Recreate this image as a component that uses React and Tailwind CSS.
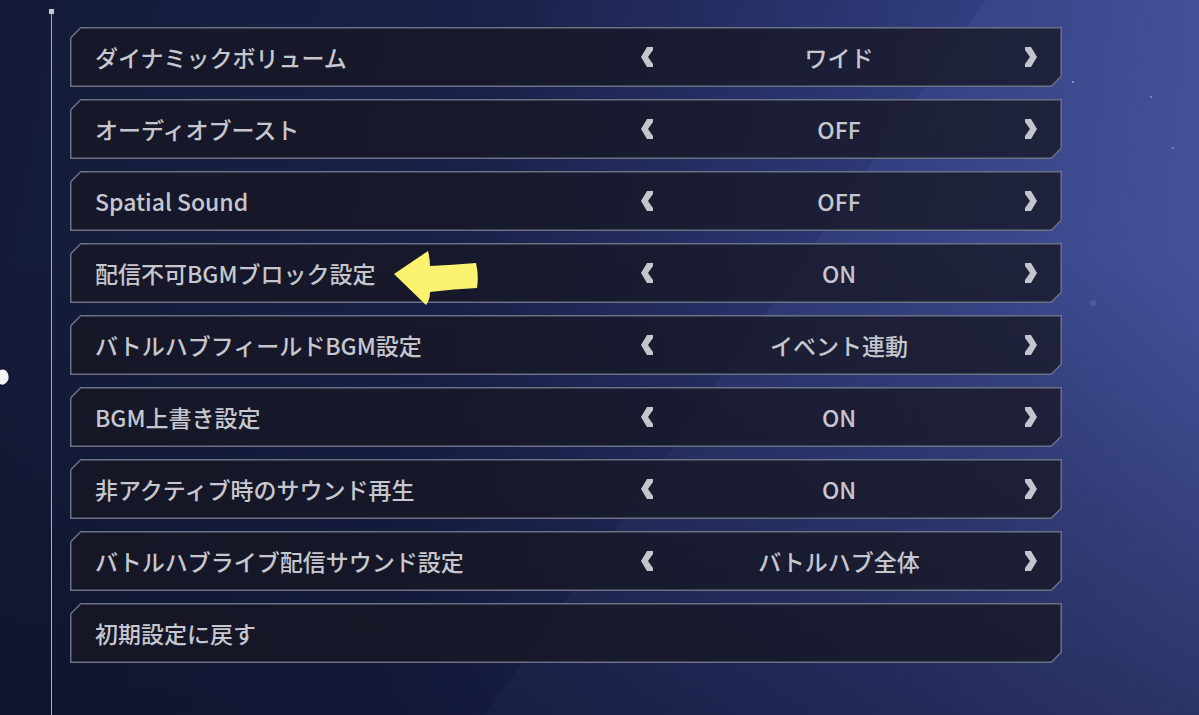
import React from "react";

const rows = [
  { label: "ダイナミックボリューム", value: "ワイド" },
  { label: "オーディオブースト", value: "OFF" },
  { label: "Spatial Sound", value: "OFF" },
  { label: "配信不可BGMブロック設定", value: "ON", pointer: true },
  { label: "バトルハブフィールドBGM設定", value: "イベント連動" },
  { label: "BGM上書き設定", value: "ON" },
  { label: "非アクティブ時のサウンド再生", value: "ON" },
  { label: "バトルハブライブ配信サウンド設定", value: "バトルハブ全体" },
  { label: "初期設定に戻す" },
];

function Chevron({ dir }) {
  const pts =
    dir === "left"
      ? "12,0 6,0 0,10 6,20 12,20 12,17 7,10 12,3"
      : "0,0 6,0 12,10 6,20 0,20 0,17 5,10 0,3";
  return (
    <svg width="12" height="20" viewBox="0 0 12 20" className="shrink-0">
      <polygon points={pts} fill="#c4c6cd" />
    </svg>
  );
}

function YellowArrow() {
  return (
    <svg width="92" height="58" viewBox="0 0 92 58" className="absolute left-[322px] top-[-12px]">
      <path
        d="M2 24 L36 1 Q38 9 38 16 Q60 15 84 13 Q87 25 85 38 Q62 39 38 42 Q38 50 34 55 Z"
        fill="#fbf36f"
      />
    </svg>
  );
}

function Row({ label, value, pointer }) {
  return (
    <div className="relative h-[60px] w-[992px]">
      <svg width="992" height="60" viewBox="0 0 992 60" className="absolute inset-0">
        <polygon
          points="0.75,10.75 10.75,0.75 991.25,0.75 991.25,49.25 981.25,59.25 0.75,59.25"
          fill="rgba(22,22,34,0.76)"
          stroke="#6c7085"
          strokeWidth="1.5"
        />
      </svg>
      <div className="relative flex h-full items-center text-[23px] font-medium text-[#c6c7ce]">
        <div className="relative w-[571px] pl-[25px] leading-none">
          {label}
          {pointer && <YellowArrow />}
        </div>
        {value && (
          <>
            <Chevron dir="left" />
            <div className="w-[372px] text-center leading-none">{value}</div>
            <Chevron dir="right" />
          </>
        )}
      </div>
    </div>
  );
}

export default function App() {
  return (
    <div
      className="relative flex h-[715px] w-[1199px] overflow-hidden bg-[linear-gradient(180deg,rgba(8,10,30,0)_35%,rgba(8,10,30,0.45)_100%),linear-gradient(125deg,rgba(255,255,255,0)_58%,rgba(120,140,220,0.08)_58%,rgba(120,140,220,0.02)_80%),linear-gradient(100deg,#141a37_0%,#1a2149_38%,#2d3977_68%,#4857a2_100%)]"
      style={{ fontFamily: '"Noto Sans CJK JP", "Noto Sans", sans-serif' }}
    >
      {/* left white blob */}
      <svg width="10" height="20" viewBox="0 0 10 20" className="absolute left-0 top-[367px]">
        <path d="M0 3 Q6 1 8 7 Q10 12 6 16 Q3 19 0 17 Z" fill="#f2f2f5" />
      </svg>

      {/* star dots */}
      <div className="absolute left-[1072px] top-[81px] h-[2px] w-[2px] rounded-full bg-white/50" />
      <div className="absolute left-[1150px] top-[96px] h-[2px] w-[2px] rounded-full bg-white/40" />
      <div className="absolute left-[1172px] top-[147px] h-[2px] w-[2px] rounded-full bg-white/40" />
      <div className="absolute left-[1090px] top-[300px] h-[6px] w-[6px] rounded-full bg-white/10" />

      <div className="ml-[49px] flex w-[5px] flex-col items-center pt-[9px]">
        <div className="h-[5px] w-[5px] bg-[#c4c7d6]" />
        <div className="w-[1.5px] flex-1 bg-[#a9adc0]" />
      </div>

      <div className="ml-[16px] flex flex-col gap-[12px] pt-[27px]">
        {rows.map((r) => (
          <Row key={r.label} {...r} />
        ))}
      </div>
    </div>
  );
}
